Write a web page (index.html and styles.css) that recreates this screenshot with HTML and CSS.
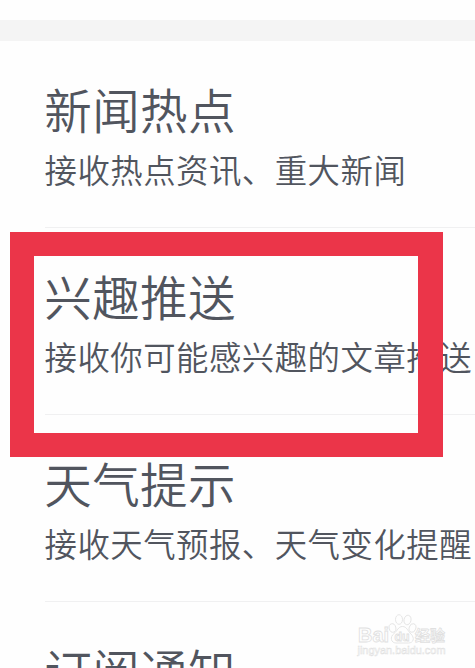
FILE: index.html
```html
<!DOCTYPE html>
<html lang="zh-CN">
<head>
<meta charset="utf-8">
<title>推送设置</title>
<link rel="stylesheet" href="styles.css">
</head>
<body>
<main class="screen">
  <div class="divider-band"></div>
  <section class="list">
    <article class="item"><h2 class="title">新闻热点</h2><p class="desc">接收热点资讯、重大新闻</p></article>
    <article class="item"><h2 class="title">兴趣推送</h2><p class="desc">接收你可能感兴趣的文章推送</p></article>
    <article class="item"><h2 class="title">天气提示</h2><p class="desc">接收天气预报、天气变化提醒</p></article>
    <article class="item"><h2 class="title">订阅通知</h2></article>
  </section>
  <div class="highlight"></div>
  <svg class="watermark" viewBox="0 0 100 54" width="100" height="54">
    <g class="mark">
      <text class="brand" x="4" y="31" textLength="31" lengthAdjust="spacingAndGlyphs">Bai</text>
      <ellipse cx="38.500" cy="17" rx="3.300" ry="4.300" transform="rotate(-15 38.500 17)"/>
      <ellipse cx="45" cy="8.500" rx="3.500" ry="4.800"/>
      <ellipse cx="53.500" cy="9" rx="3.500" ry="4.800" transform="rotate(12 53.500 9)"/>
      <ellipse cx="58.500" cy="17" rx="3.300" ry="4.400" transform="rotate(18 58.500 17)"/>
      <path d="M48.500 15.500C44 15.500 43.500 20 40 22.500C35.500 26 37 32 42 32H54.500C59.500 32 61 27 57 23C53.500 20 53 15.500 48.500 15.500Z"/>
      <text class="du" x="40.500" y="30" textLength="15" lengthAdjust="spacingAndGlyphs">du</text>
      <text class="cn" x="61" y="30" textLength="30" lengthAdjust="spacingAndGlyphs">经验</text>
      <text class="url" x="3.500" y="43" textLength="88" lengthAdjust="spacingAndGlyphs">jingyan.baidu.com</text>
    </g>
  </svg>
</main>
</body>
</html>
```
FILE: styles.css
```css
* { box-sizing: border-box; margin: 0; padding: 0; }
body {
  background: #fefefe;
  color: #51555e;
  font-family: "Noto Sans CJK SC", sans-serif;
}
.screen {
  position: relative;
  width: 475px;
  height: 668px;
  padding-top: 20px;
  overflow: hidden;
}
.divider-band { height: 21px; background: #f4f4f4; }
.list { padding-left: 45px; }
.item {
  height: 187px;
  padding-top: 36px;
  border-bottom: 1px solid #f0f0f1;
  white-space: nowrap;
}
.title {
  margin-left: -0.7px;
  font-size: 47.5px;
  font-weight: 350;
  line-height: 64px;
  letter-spacing: 0.4px;
}
.desc {
  margin-left: -0.5px;
  font-size: 32.4px;
  font-weight: 350;
  line-height: 56px;
  letter-spacing: 0.5px;
}
.highlight {
  position: absolute;
  left: 10px;
  top: 232px;
  width: 433px;
  height: 225px;
  border: 24px solid #eb3549;
  border-right-width: 25px;
}
.watermark { position: absolute; left: 354px; top: 611px; }
.mark { fill: #fefefe; stroke: #e0e0e0; stroke-width: 0.8; }
.brand { font: bold 20px "Liberation Sans", sans-serif; }
.du { font: bold 12px "Liberation Sans", sans-serif; }
.cn { font: bold 15px "Noto Sans CJK SC", sans-serif; }
.url { font: 11px "Liberation Sans", sans-serif; stroke-width: 0.5; }
```
